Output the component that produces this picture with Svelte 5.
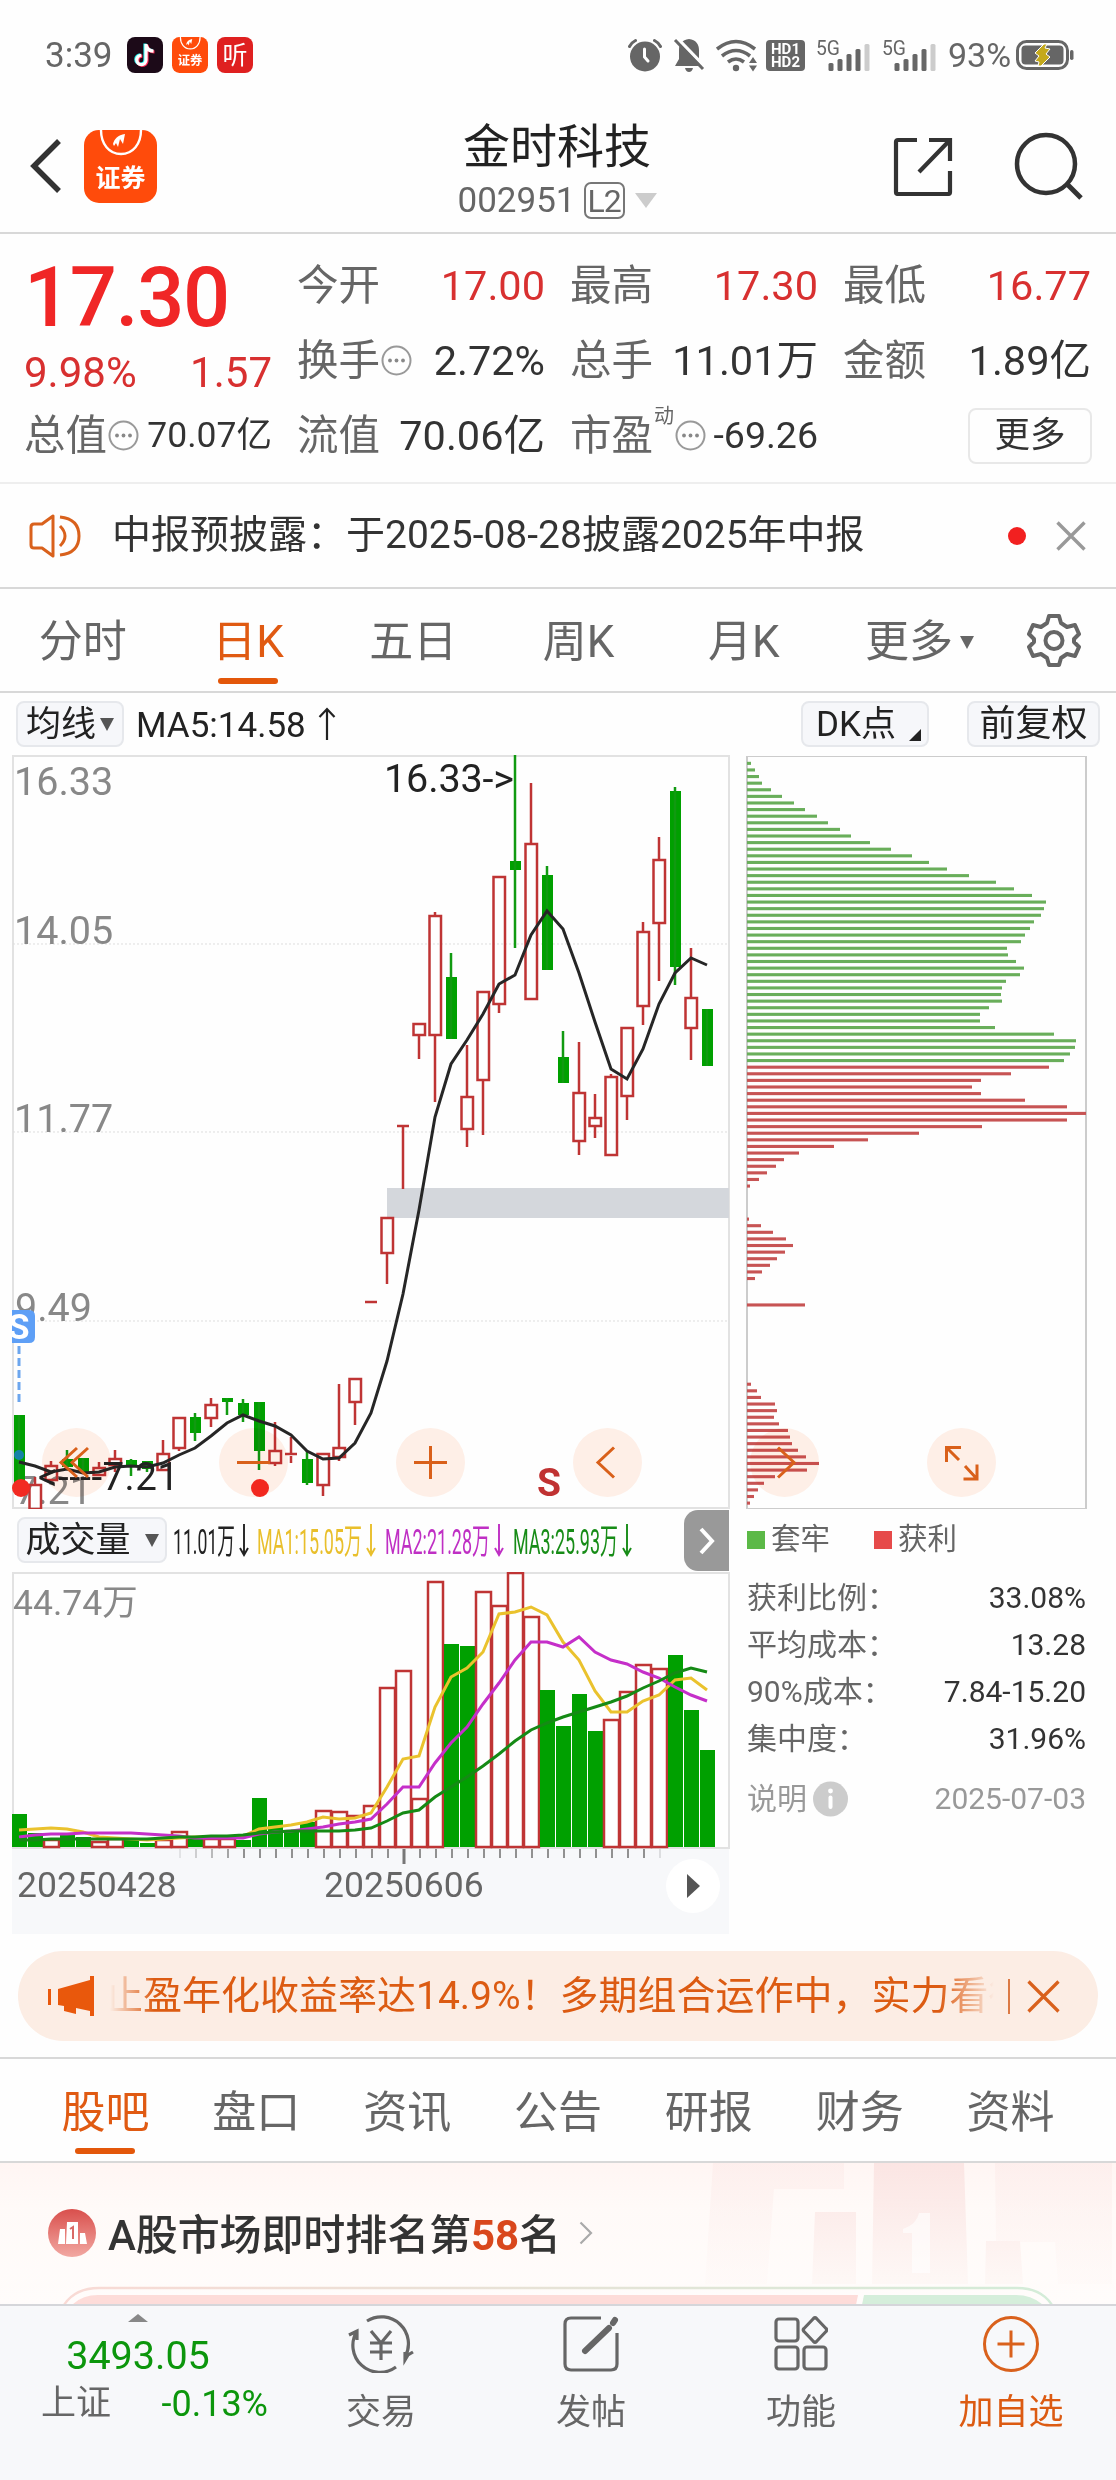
<script>
  // [up, high, body top, body bottom, low]
  const candles = [
    [0, 660, 660, 729, 729], [1, 722, 730, 754, 754], [1, 706, 711, 725, 726], [0, 695, 704, 712, 712],
    [0, 703, 703, 718, 718], [1, 707, 713, 720, 720], [1, 695, 704, 710, 717], [0, 704, 705, 712, 721],
    [0, 706, 706, 714, 717], [1, 685, 699, 715, 715], [1, 663, 663, 693, 696], [0, 658, 662, 678, 686],
    [1, 643, 650, 663, 672], [0, 643, 643, 647, 660], [0, 644, 648, 660, 667], [0, 647, 647, 696, 715],
    [1, 667, 696, 708, 711], [1, 682, 699, 701, 708], [0, 696, 704, 728, 730], [1, 699, 699, 730, 741],
    [1, 629, 693, 702, 706], [1, 624, 624, 647, 670], [1, 547, 547, 548, 548], [1, 463, 463, 498, 529],
    [1, 371, 371, 372, 434], [1, 269, 269, 280, 304], [1, 157, 161, 280, 347], [0, 198, 222, 284, 284],
    [1, 290, 342, 374, 392], [1, 237, 237, 325, 380], [1, 122, 122, 249, 258], [0, 0, 106, 115, 193],
    [1, 28, 89, 244, 244], [0, 111, 120, 215, 215], [0, 276, 302, 328, 328], [1, 287, 338, 386, 400],
    [1, 339, 363, 371, 383], [1, 319, 322, 400, 400], [1, 273, 273, 341, 365], [1, 167, 177, 251, 270],
    [1, 82, 105, 168, 226], [0, 32, 36, 212, 230], [1, 193, 243, 273, 305], [0, 254, 254, 311, 311]
  ];
  const ma5 = [707, 711, 717, 714, 718, 717, 712, 711, 712, 708, 700, 693, 681, 668, 660, 666, 671, 680, 696, 704, 703, 688, 658, 606, 539, 455, 362, 309, 285, 259, 229, 220, 180, 156, 174, 218, 267, 314, 324, 294, 249, 218, 203, 210];

  const volumes = [242, 261, 268, 262, 265, 270, 267, 268, 271, 268, 260, 266, 267, 267, 268, 226, 248, 260, 250, 239, 240, 244, 234, 116, 99, 227, 10, 72, 74, 20, 34, 1, 45, 118, 154, 122, 159, 148, 120, 93, 97, 83, 138, 178];
  const volUp = [2, 5, 6, 9, 10, 12, 13, 19, 20, 21, 22, 23, 24, 25, 26, 29, 30, 31, 32, 37, 38, 39, 40];
  const volMa1 = [258, 257, 256, 257, 260, 265, 266, 267, 268, 267, 266, 265, 265, 265, 264, 257, 255, 253, 250, 245, 247, 246, 241, 215, 187, 184, 135, 105, 96, 80, 42, 40, 35, 43, 70, 88, 119, 140, 140, 129, 123, 108, 106, 118];
  const volMa2 = [265, 263, 262, 262, 261, 261, 261, 261, 262, 263, 264, 266, 266, 266, 266, 262, 260, 259, 257, 255, 252, 250, 247, 232, 215, 215, 191, 171, 155, 132, 111, 88, 70, 70, 75, 65, 80, 88, 92, 100, 106, 115, 123, 129];
  const volMa3 = [268, 268, 267, 267, 267, 267, 267, 267, 267, 266, 265, 265, 264, 264, 263, 261, 260, 259, 259, 259, 259, 258, 256, 249, 241, 238, 225, 215, 205, 194, 182, 169, 158, 151, 145, 140, 135, 130, 124, 116, 109, 101, 96, 100];

  const chips = [
    4, 8, 12, 15, 24, 35, 47, 58, 70, 81, 93, 104, 123, 144, 165, 182, 200, 222, 249, 267, 285, 299, 297, 294, 287, 283, 278, 274, 260, 261, 269, 277, 273, 259, 255, 254, 255, 242, 233, 233, 248, 307, 329, 328, 323, 317,
    302, 264, 234, 225, 234, 278, 320, 339, 320, 235, 172, 121, 87, 52, 37, 29, 20, 12, 3, 0, 0, 0, 0, 2, 14, 26, 39, 46, 38, 30, 23, 15, 8, 0, 0, 0, 58, 0, 0, 0, 0, 0, 0, 0, 0, 0, 0, 0,
    4, 10, 14, 28, 30, 27, 32, 41, 43, 45, 51, 59, 72, 60, 28, 17, 11, 7, 3
  ];
  const greenChips = 46;

  const gridLines = [189, 377, 566];
  const priceLabels = [['16.33', 40], ['14.05', 189], ['11.77', 377], ['9.49', 566], ['7.21', 749]];
  const ticks = Array.from({ length: 31 }, (_, i) => i + 10);

  const volStats = [
    { text: '11.01万', x: 161, w: 62, color: '#222' },
    { text: 'MA1:15.05万', x: 245, w: 105, color: '#e9bf2b' },
    { text: 'MA2:21.28万', x: 373, w: 105, color: '#bf2fc4' },
    { text: 'MA3:25.93万', x: 501, w: 105, color: '#178c17' }
  ];

  const periods = ['分时', '日K', '五日', '周K', '月K'];
  const sections = ['股吧', '盘口', '资讯', '公告', '研报', '财务', '资料'];
  const costs = [
    ['获利比例：', '33.08%'],
    ['平均成本：', '13.28'],
    ['90%成本：', '7.84-15.20'],
    ['集中度：', '31.96%']
  ];

  const cx = (i) => 7 + i * 16;
  const line = (values) => values.map((y, i) => `${cx(i)},${y}`).join(' ');
  const tickOpacity = (i) => (i < 14 ? (i - 9) * 0.2 : i === 40 ? 0.25 : 1);
</script>

{#snippet dots()}
  <svg class="dots" width="31" height="31" viewBox="0 0 31 31">
    <circle cx="15.5" cy="15.5" r="14" fill="none" stroke="#999" stroke-width="2" />
    <circle cx="9" cy="15.5" r="1.9" fill="#888" />
    <circle cx="15.5" cy="15.5" r="1.9" fill="#888" />
    <circle cx="22" cy="15.5" r="1.9" fill="#888" />
  </svg>
{/snippet}

{#snippet brand(size)}
  <svg width={size} height={size} viewBox="0 0 73 73">
    <rect width="73" height="73" rx="15" fill="#ff4b0b" />
    <path d="M17 0c0 14 8 24 20 24s20-10 20-24" fill="none" stroke="#fff" stroke-width="2.4" />
    <path d="M29 14c1-5 5-9 12-10l-2 10-3-5-2 8-2-4-2 3z" fill="#fff" />
    <text x="36.5" y="57" text-anchor="middle" font-size="25" font-weight="700" fill="#fff">证券</text>
  </svg>
{/snippet}

{#snippet signal()}
  <svg class="signal" width="54" height="32" viewBox="0 0 54 32">
    <text x="0" y="16" font-size="20" textLength="24" lengthAdjust="spacingAndGlyphs" fill="#666">5G</text>
    <g fill="#666">
      <rect x="12.5" y="24" width="5" height="8" rx="1.5" />
      <rect x="21.5" y="20" width="5" height="12" rx="1.5" />
      <rect x="30.5" y="15" width="5" height="17" rx="1.5" />
      <rect x="39.5" y="10" width="5" height="22" rx="1.5" />
      <rect x="48.5" y="5" width="5" height="27" rx="1.5" fill="#ccc" />
    </g>
  </svg>
{/snippet}

<div class="page">
  <div class="status">
    <span class="time">3:39</span>
    <svg class="app" width="36" height="36" viewBox="0 0 36 36">
      <rect width="36" height="36" rx="8" fill="#1c0a18" />
      <g fill="none" stroke-width="3.2">
        <path d="M19 7v16a4.6 4.6 0 1 1-4.6-4.6M19 7.5c.5 4 3.5 6.5 7.5 6.7" stroke="#25f4ee" transform="translate(-1 -.6)" />
        <path d="M19 7v16a4.6 4.6 0 1 1-4.6-4.6M19 7.5c.5 4 3.5 6.5 7.5 6.7" stroke="#fe2c55" transform="translate(1 .8)" />
        <path d="M19 7v16a4.6 4.6 0 1 1-4.6-4.6M19 7.5c.5 4 3.5 6.5 7.5 6.7" stroke="#fff" />
      </g>
    </svg>
    <span class="app">{@render brand(36)}</span>
    <span class="app listen">听</span>

    <div class="status-right">
      <svg width="34" height="34" viewBox="0 0 34 34">
        <circle cx="17" cy="18.5" r="15" fill="#666" />
        <path d="M1.5 8.5q2-4 6-6M32.5 8.5q-2-4-6-6" fill="none" stroke="#666" stroke-width="3" stroke-linecap="round" />
        <path d="M16.5 11v8l3.500 4" fill="none" stroke="#fff" stroke-width="3" stroke-linecap="round" />
      </svg>
      <svg width="32" height="34" viewBox="0 0 32 34">
        <path d="M16 1c7 1 10 5 10 11v9l4 7H2l4-7v-9c0-6 3-10 10-11z" fill="#666" />
        <path d="M12 30h8q-1 4-4 4t-4-4z" fill="#666" />
        <path d="M4 0l28 29" stroke="#fff" stroke-width="3.5" />
        <path d="M2 2l28 29" stroke="#666" stroke-width="3" />
      </svg>
      <svg width="42" height="33" viewBox="0 0 42 33">
        <g fill="none" stroke="#666" stroke-width="3.6">
          <path d="M1 10q19-15 38 0" />
          <path d="M6 17q14-11 28 0" />
          <path d="M12 23q8-6 16 0" />
        </g>
        <circle cx="20" cy="29" r="3.2" fill="#666" />
        <path d="M33 24l4-6 4 6zM33 26.5l4 6 4-6z" fill="#666" />
      </svg>
      <svg class="hd" width="39" height="31" viewBox="0 0 39 31">
        <rect width="39" height="31" rx="4" fill="#666" />
        <g font-size="14" font-weight="700" fill="#fff">
          <text x="5" y="14" textLength="29" lengthAdjust="spacingAndGlyphs">HD1</text>
          <text x="5" y="27" textLength="29" lengthAdjust="spacingAndGlyphs">HD2</text>
        </g>
      </svg>
      {@render signal()}
      {@render signal()}
      <span class="percent">93%</span>
      <svg width="58" height="30" viewBox="0 0 58 30">
        <rect x="1.5" y="1.5" width="50" height="27" rx="9" fill="none" stroke="#666" stroke-width="3" />
        <rect x="5.5" y="5.5" width="42" height="19" rx="4" fill="#666" />
        <rect x="54" y="10" width="3.5" height="10" rx="1.7" fill="#666" />
        <path d="M28 4l-9 9 4 3-4 5 4 1-1 4h3l9-9-4-3 4-5-5-1 2-4z" fill="#c4a91c" stroke="#fff" />
      </svg>
    </div>
  </div>

  <header>
    <svg class="back" width="34" height="56" viewBox="0 0 34 56"><path d="M30 3L5 28l25 25" fill="none" stroke="#333" stroke-width="5.5" /></svg>
    {@render brand(73)}
    <div class="title">
      <div class="name">金时科技</div>
      <div class="code">002951<span class="level">L2</span><i></i></div>
    </div>
    <svg class="share" width="60" height="60" viewBox="0 0 60 60">
      <path d="M24 4H5q-2 0-2 2v50q0 2 2 2h50q2 0 2-2V35M36 4h21v21M57 4L26 36" fill="none" stroke="#333" stroke-width="4.2" />
    </svg>
    <svg width="72" height="72" viewBox="0 0 72 72">
      <circle cx="33" cy="34" r="29" fill="none" stroke="#333" stroke-width="4.5" />
      <path d="M54 54l14 14" stroke="#333" stroke-width="5" />
    </svg>
  </header>

  <section class="quote">
    <div class="main">
      <div class="price">17.30</div>
      <div class="change"><span>9.98%</span><span>1.57</span></div>
      <div class="cell"><label>总值</label>{@render dots()}<b class="small">70.07亿</b></div>
    </div>
    <div>
      <div class="cell"><label>今开</label><b class="red">17.00</b></div>
      <div class="cell"><label>换手</label>{@render dots()}<b>2.72%</b></div>
      <div class="cell"><label>流值</label><b>70.06亿</b></div>
    </div>
    <div>
      <div class="cell"><label>最高</label><b class="red">17.30</b></div>
      <div class="cell"><label>总手</label><b>11.01万</b></div>
      <div class="cell"><label>市盈</label><sup>动</sup>{@render dots()}<b class="mid">-69.26</b></div>
    </div>
    <div>
      <div class="cell"><label>最低</label><b class="red">16.77</b></div>
      <div class="cell"><label>金额</label><b>1.89亿</b></div>
      <div class="cell"><button class="more">更多</button></div>
    </div>
  </section>

  <div class="notice">
    <svg width="52" height="44" viewBox="0 0 52 44">
      <g fill="none" stroke="#d9611c" stroke-width="3">
        <path d="M24 2v40l-11-8H5q-3 0-3-3V13q0-3 3-3h8z" stroke-linejoin="round" />
        <path d="M31 12q10 10 0 20M31 3q19 2 19 19T31 41" />
      </g>
    </svg>
    <span>中报预披露：于2025-08-28披露2025年中报</span>
    <em></em>
    <svg width="30" height="30" viewBox="0 0 30 30"><path d="M1.5 1.5l27 27M28.5 1.5l-27 27" stroke="#999" stroke-width="3.4" /></svg>
  </div>

  <nav class="periods">
    {#each periods as period, i}
      <span class:active={i === 1}>{period}</span>
    {/each}
    <span>更多<i></i></span>
    <svg width="54" height="54" viewBox="0 0 54 54">
      <g fill="none" stroke="#666" stroke-width="4" stroke-linejoin="round">
        <path d="M22 3h10l2 7 6 4 8-2 4 9-5 5v3l5 5-4 9-8-2-6 4-2 7H22l-2-7-6-4-8 2-4-9 5-5v-3l-5-5 4-9 8 2 6-4z" />
        <circle cx="27" cy="27.5" r="8.5" />
      </g>
    </svg>
  </nav>

  <div class="toolbar">
    <button class="tag">均线<i></i></button>
    <span>MA5:14.58</span>
    <svg width="18" height="34" viewBox="0 0 18 34"><path d="M9 33V2M1.5 10L9 2l7.5 8" fill="none" stroke="#222" stroke-width="2.2" /></svg>
    <button class="tag dk">DK点<i></i></button>
    <button class="tag adj">前复权</button>
  </div>

  <div class="charts">
    <div class="left">
      <svg class="kline" width="718" height="754" viewBox="0 0 718 754">
        <rect x="1" y="1" width="716" height="752" fill="none" stroke="#e2e2e2" stroke-width="2" />
        {#each gridLines as y}
          <line x1="1" x2="717" y1={y} y2={y} stroke="#ddd" stroke-dasharray="2 2" />
        {/each}
        <g font-size="39.5" fill="#888">
          {#each priceLabels as [label, y]}
            <text x={label.length > 4 ? 2 : 3} {y}>{label}</text>
          {/each}
        </g>
        <rect x="375" y="433" width="342" height="30" fill="#d4d7dc" />
        {#each candles as [up, high, top, bottom, low], i}
          {#if up}
            <g fill="none" stroke="#bf3434" stroke-width="2.5">
              {#if bottom - top < 3}
                <path d="M{cx(i) - 6} {top}h12" />
              {:else}
                <rect x={cx(i) - 5.5} y={top} width="11.5" height={bottom - top} />
              {/if}
              <path d="M{cx(i)} {high}V{top}M{cx(i)} {bottom}V{low}" />
            </g>
          {:else}
            <rect x={cx(i) - 5} y={top} width="11" height={bottom - top} fill="#00a000" />
            <path d="M{cx(i)} {high}V{low}" stroke="#119a11" stroke-width="2.5" />
          {/if}
        {/each}
        <polyline points={line(ma5)} fill="none" stroke="#262626" stroke-width="3" />
        <text x="372" y="37" font-size="39.5" textLength="130" fill="#222">16.33-&gt;</text>
        <text x="26" y="735" font-size="38.5" textLength="141" fill="#222">&lt;----7.21</text>
        <path d="M0 555h17q6 0 6 6v21q0 6-6 6H0z" fill="#5e9ff6" />
        <text x="-4" y="584" font-size="35" font-weight="700" fill="#fff">S</text>
        <path d="M7 591v58" stroke="#6ca6ee" stroke-width="3" stroke-dasharray="8 4" />
        <circle cx="7" cy="700" r="5" fill="#1682a8" />
        <circle cx="9" cy="733" r="9" fill="#f22a22" />
        <circle cx="248" cy="733" r="9" fill="#f22a22" />
        <text x="525" y="741" font-size="39" font-weight="700" fill="#c03232">S</text>
      </svg>

      <div class="vol-head">
        <svg width="717" height="63" viewBox="0 0 717 63">
          <g font-size="35">
            {#each volStats as s}
              <text x={s.x} y="45" textLength={s.w} lengthAdjust="spacingAndGlyphs" fill={s.color}>{s.text}</text>
              <path d="M{s.x + s.w + 9} 15v31m-4-7l4 7 4-7" fill="none" stroke={s.color} stroke-width="1.9" />
            {/each}
          </g>
        </svg>
        <button class="tag vol">成交量<i></i></button>
        <button class="next">
          <svg width="16" height="28" viewBox="0 0 16 28"><path d="M2 2l11 12L2 26" fill="none" stroke="#fff" stroke-width="4" /></svg>
        </button>
      </div>

      <svg width="718" height="277" viewBox="0 0 718 277">
        <rect x="1" y="1" width="716" height="275" fill="none" stroke="#e2e2e2" stroke-width="2" />
        {#each volumes as y, i}
          {#if volUp.includes(i)}
            <rect x={cx(i) - 7} {y} width="15" height={275 - y} fill="none" stroke="#bf3434" stroke-width="2.5" />
          {:else}
            <rect x={cx(i) - 7} {y} width="15" height={275 - y} fill="#00a000" />
          {/if}
        {/each}
        <g fill="none" stroke-width="3">
          <polyline points={line(volMa1)} stroke="#eac22d" />
          <polyline points={line(volMa2)} stroke="#c52fc9" />
          <polyline points={line(volMa3)} stroke="#158a15" />
        </g>
        <text x="1" y="43" font-size="35.5" fill="#888">44.74万</text>
      </svg>

      <div class="axis">
        <svg width="717" height="17" viewBox="0 0 717 17">
          {#each ticks as i}
            <path d="M{cx(i) + 1} 0v{i === 24 ? 15 : 9}" stroke="#777" stroke-width={i === 24 ? 3 : 1.6} opacity={tickOpacity(i)} />
          {/each}
        </svg>
        <div class="dates"><span>20250428</span><span>20250606</span><button><i></i></button></div>
      </div>
    </div>

    <div class="right">
      <svg width="342" height="754" viewBox="0 0 342 754">
        <path d="M0 1.5h341M0 753.5h341" stroke="#ccc" />
        <path d="M1 1v753M340 1v753" stroke="#ccc" stroke-width="2" />
        {#each chips as w, i}
          {#if w}
            <rect x="1" y={6.8 + i * 6.605} width={w} height="3.1" fill={i < greenChips ? '#69ae5a' : '#c75454'} />
          {/if}
        {/each}
      </svg>
      <div class="legend"><i></i>套牢<i class="win"></i>获利</div>
      {#each costs as [label, value]}
        <div class="cost"><span>{label}</span><b>{value}</b></div>
      {/each}
      <div class="cost explain">
        <span>说明</span>
        <svg width="35" height="36" viewBox="0 0 35 36">
          <circle cx="17.5" cy="18" r="17.5" fill="#ccc" />
          <circle cx="17.5" cy="10" r="2.4" fill="#fff" />
          <path d="M17.5 16.5v9.5" stroke="#fff" stroke-width="4" stroke-linecap="round" />
        </svg>
        <b>2025-07-03</b>
      </div>
    </div>

    <div class="controls">
      <button><svg viewBox="0 0 69 69"><path d="M35 20L19 34.5 35 49M46 20L30 34.5 46 49" /></svg></button>
      <button><svg viewBox="0 0 69 69"><path d="M18 34.5h33" /></svg></button>
      <button><svg viewBox="0 0 69 69"><path d="M18 34.5h33M34.5 18v33" /></svg></button>
      <button><svg viewBox="0 0 69 69"><path d="M41 19.5L25 34.5l16 15" /></svg></button>
      <button><svg viewBox="0 0 69 69"><path d="M28 19.5l16 15-16 15" /></svg></button>
      <button><svg viewBox="0 0 69 69"><path d="M19.5 34V19.5H34M20 20l12 12M50 36.5V51H36.5M50 51L38 38" /></svg></button>
    </div>
  </div>

  <div class="promo">
    <svg width="46" height="40" viewBox="0 0 46 40"><path d="M0 13h3v16H0zM10 13L42 4V0h4v40h-4v-5l-14-3v6l-12-3v-5l-6-1z" fill="#e9580c" /></svg>
    <div class="marquee"><span>止盈年化收益率达14.9%！多期组合运作中，实力看得见</span></div>
    <em></em>
    <svg width="33" height="33" viewBox="0 0 33 33"><path d="M1.5 1.5l30 30M31.5 1.5l-30 30" stroke="#d9611c" stroke-width="3.2" /></svg>
  </div>

  <nav class="sections">
    {#each sections as name, i}
      <span class:active={i === 0}>{name}</span>
    {/each}
  </nav>

  <section class="rank">
    <svg class="podium" width="416" height="121" viewBox="0 0 416 121">
      <defs>
        <linearGradient id="fade" x1="0" y1="0" x2="0" y2="121" gradientUnits="userSpaceOnUse">
          <stop offset="0" stop-color="#fbe5e3" />
          <stop offset="1" stop-color="#fef8f6" />
        </linearGradient>
      </defs>
      <g fill="url(#fade)">
        <path d="M13 0h131v26H74l-7 95H5z" opacity=".4" />
        <path d="M115 49h41v72h-44zM174 0h90l4 121H172zM286 78h34l3 43h-38z" />
        <path d="M295 0h117v121h-54l-3-42h-59z" opacity=".4" />
      </g>
      <path d="M203 66q14-5 16-16h11v60h-18V70h-9z" fill="#fff" opacity=".6" />
    </svg>
    <div class="rank-row">
      <svg width="48" height="48" viewBox="0 0 48 48">
        <defs>
          <linearGradient id="medal" x1="0" y1="0" x2="0" y2="1">
            <stop offset="0" stop-color="#d94f4c" />
            <stop offset="1" stop-color="#f2a8a2" />
          </linearGradient>
        </defs>
        <circle cx="24" cy="24" r="24" fill="url(#medal)" />
        <path d="M12 20h5v15h-7zM19 13h11v22H18zM32 24h5l2 11h-7z" fill="#fff" />
        <path d="M22 20l3-2v12" fill="none" stroke="#d96a66" stroke-width="2" />
      </svg>
      <strong>A股市场即时排名第<em>58</em>名</strong>
      <svg width="14" height="24" viewBox="0 0 14 24"><path d="M1.5 1.5L12 12 1.5 22.5" fill="none" stroke="#aaa" stroke-width="2.2" /></svg>
    </div>
    <svg class="vote" width="990" height="18" viewBox="0 0 990 18">
      <defs>
        <linearGradient id="edge"><stop offset="0" stop-color="#f9dad5" /><stop offset="1" stop-color="#d3ecd8" /></linearGradient>
      </defs>
      <path d="M1 19Q12 2 36 2h918q24 0 35 17" fill="none" stroke="url(#edge)" stroke-width="2.4" />
      <path d="M9 19q10-10 26-10h760l-2 10z" fill="#fddcd9" />
      <path d="M801 9h152q16 0 27 10H799z" fill="#d5eedb" />
    </svg>
  </section>

  <footer>
    <div class="index">
      <i></i>
      <strong>3493.05</strong>
      <p><span>上证</span><b>-0.13%</b></p>
    </div>
    <div class="item">
      <svg width="66" height="58" viewBox="0 0 66 58">
        <g fill="none" stroke="#666" stroke-width="3.2">
          <path d="M19 6A27 27 0 0 1 57 42M48 52A27 27 0 0 1 9 16M1 20l8-4v9M65 37l-5 3-3 5v-8" />
          <path d="M23 16l10 12 10-12M33 28v17M22 28h22M22 37h22" />
        </g>
      </svg>
      交易
    </div>
    <div class="item">
      <svg width="56" height="58" viewBox="0 0 56 58">
        <path d="M38 3H8Q2 3 2 9v40q0 6 6 6h40q6 0 6-6V18" fill="none" stroke="#666" stroke-width="3.2" />
        <path d="M52 5l-2 3M46 13L22 36" stroke="#666" stroke-width="6" stroke-linecap="round" />
      </svg>
      发帖
    </div>
    <div class="item">
      <svg width="54" height="58" viewBox="0 0 54 58">
        <g fill="none" stroke="#666" stroke-width="3.2">
          <rect x="2" y="4" width="22" height="22" rx="3" />
          <rect x="2" y="32" width="22" height="22" rx="3" />
          <rect x="30" y="32" width="22" height="22" rx="3" />
          <path d="M39.5 3.5q1.5-1.5 3 0l9.5 10q1.5 1.5 0 3l-9.5 10q-1.500 1.500-3 0l-9.500-10q-1.500-1.500 0-3z" />
        </g>
      </svg>
      功能
    </div>
    <div class="item add">
      <svg width="58" height="58" viewBox="0 0 58 58">
        <g fill="none" stroke="#d9611c" stroke-width="3"><circle cx="29" cy="29" r="26.5" /><path d="M15.5 29h27M29 15.5v27" /></g>
      </svg>
      加自选
    </div>
  </footer>
</div>

<style>
:global(body) {
    margin: 0;
    background: #fff;
}

.page {
    width: 1116px;
    height: 2480px;
    overflow: hidden;
    background: #fefefe;
    font-family: Roboto, "Noto Sans CJK SC", sans-serif;
    line-height: 1;
    color: #333;
}

.page * {
    box-sizing: border-box;
}

svg {
    display: block;
    flex: none;
}

i, em {
    font-style: normal;
}

b {
    font-weight: 400;
}

button {
    display: flex;
    align-items: center;
    justify-content: center;
    padding: 0;
    border: 0;
    background: none;
    font: inherit;
    color: inherit;
    line-height: 1;
}

.status {
    display: flex;
    align-items: center;
    height: 110px;
    padding-left: 45px;
    color: #666;
    font-size: 35px;
}

.time {
    width: 82px;
}

.app {
    margin-right: 9px;
}

.listen {
    display: flex;
    align-items: center;
    justify-content: center;
    width: 36px;
    height: 36px;
    border-radius: 8px;
    background: #df2020;
    color: #fff;
    font-size: 25px;
}

.status-right {
    display: flex;
    align-items: center;
    gap: 11px;
    margin-left: auto;
    padding-right: 42px;
}

.hd {
    margin-left: -3px;
}

.signal {
    margin-right: 1px;
    overflow: visible;
}

.percent {
    width: 62px;
    margin: 0 -5px 0 0;
    font-size: 34px;
}

header {
    display: flex;
    align-items: center;
    height: 124px;
    padding: 0 31px 10px 29px;
    border-bottom: 2px solid #d8d8d8;
}

.back {
    margin-right: 21px;
}

.title {
    display: flex;
    flex-direction: column;
    align-items: center;
    width: 400px;
    margin: 9px auto 0 200px;
}

.name {
    margin-bottom: 12px;
    color: #222;
    font-size: 47px;
}

.code {
    display: flex;
    align-items: center;
    color: #666;
    font-size: 35px;
}

.level {
    margin-left: 8px;
    height: 37px;
    width: 41px;
    border: 2px solid #777;
    border-radius: 7px;
    font-size: 32px;
    line-height: 35px;
    text-align: center;
    letter-spacing: -1px;
}

.code i {
    margin-left: 10px;
    border: 11px solid transparent;
    border-top: 15px solid #ccc;
    border-bottom: 0;
}

.share {
    margin-right: 60px;
}

.quote {
    display: grid;
    grid-template-columns: repeat(4, 248px);
    column-gap: 25px;
    height: 250px;
    padding: 14px 0 0 24px;
    border-bottom: 2px solid #eee;
}

.cell {
    display: flex;
    align-items: center;
    height: 75px;
    font-size: 41.5px;
}

.cell label {
    color: #666;
}

.cell b, .more {
    margin-left: auto;
    white-space: nowrap;
}

.dots {
    margin-left: 1px;
}

.cell .small {
    font-size: 35.5px;
}

.cell .mid {
    font-size: 37.5px;
}

.cell sup {
    align-self: flex-start;
    margin: 8px 0 0 1px;
    color: #666;
    font-size: 20px;
}

.cell .red, .change {
    color: #d83030;
}

.price {
    height: 100px;
    color: #f02626;
    font-size: 83px;
    font-weight: 500;
    line-height: 100px;
    letter-spacing: -1.4px;
}

.change {
    display: flex;
    justify-content: space-between;
    height: 50px;
    font-size: 42px;
    line-height: 50px;
}

.more {
    width: 124px;
    height: 56px;
    margin-right: -1px;
    border: 2px solid #e8e8e8;
    border-radius: 8px;
    font-size: 35.5px;
}

.notice {
    display: flex;
    align-items: center;
    height: 105px;
    padding: 0 30px 0 29px;
    border-bottom: 2px solid #d8d8d8;
    font-size: 39px;
}

.notice span {
    margin-left: 31px;
}

.notice em {
    width: 18px;
    height: 18px;
    margin: 0 30px 0 auto;
    border-radius: 50%;
    background: #f22020;
}

.periods {
    display: flex;
    align-items: center;
    height: 104px;
    border-bottom: 2px solid #d8d8d8;
    color: #666;
    font-size: 44px;
}

.periods span {
    position: relative;
    display: flex;
    justify-content: center;
    align-items: center;
    width: 165.3px;
    height: 100%;
    padding-top: 4px;
}

.periods span:nth-of-type(6) {
    width: 201px;
    padding-right: 15px;
}

.periods i {
    margin-left: 7px;
    border: 7.5px solid transparent;
    border-top: 13px solid #666;
    border-bottom: 0;
}

.active {
    color: #e05a12;
}

.periods .active::after, .sections .active::after {
    content: '';
    position: absolute;
    left: calc(50% - 30px);
    bottom: 7px;
    width: 60px;
    height: 6px;
    border-radius: 3px;
    background: #e3570a;
}

.toolbar {
    display: flex;
    align-items: center;
    height: 62px;
    padding: 0 16px;
    color: #222;
    font-size: 35px;
}

.toolbar > span {
    margin: 2px 12px 0 12px;
}

.tag {
    width: 108px;
    height: 46px;
    border: 2px solid #e6e8ec;
    border-radius: 8px;
    background: #f6f7fa;
    color: #222;
    font-size: 35px;
}

.tag i {
    margin-left: 4px;
    border: 7.5px solid transparent;
    border-top: 13px solid #555;
    border-bottom: 0;
}

.tag.dk {
    width: 128px;
    margin: 0 38px 0 auto;
}

.tag.dk i {
    align-self: flex-end;
    margin: 0 -7px 4px 13px;
    border: 0;
    border-left: 12px solid transparent;
    border-bottom: 12px solid #222;
}

.tag.adj {
    width: 133px;
    font-size: 36px;
}

.charts {
    position: relative;
    display: flex;
    gap: 17px;
    height: 1196px;
    padding-left: 12px;
}

.left {
    width: 717px;
}

.vol-head {
    position: relative;
    height: 63px;
}

.tag.vol {
    position: absolute;
    left: 5px;
    top: 8px;
    width: 150px;
}

.tag.vol i {
    margin-left: 14px;
}

.next {
    position: absolute;
    right: 0;
    top: 1px;
    width: 45px;
    height: 61px;
    border-radius: 14px 0 0 14px;
    background: #999;
}

.axis {
    height: 85px;
    background: #f7f8fa;
}

.dates {
    display: flex;
    align-items: center;
    height: 40px;
    padding: 0 9px 0 5px;
    color: #666;
    font-size: 35.5px;
}

.dates span {
    width: 307px;
}

.dates button {
    width: 54px;
    height: 54px;
    margin-left: auto;
    border-radius: 50%;
    background: #fff;
}

.dates i {
    border: 12px solid transparent;
    border-left: 13px solid #555;
    border-right: 0;
}

.right {
    width: 340px;
}

.legend {
    display: flex;
    align-items: center;
    height: 62px;
    margin-bottom: 3px;
    color: #666;
    font-size: 29.5px;
}

.legend i {
    width: 18px;
    height: 18px;
    margin: 0 6px 0 1px;
    background: #5bb947;
}

.legend .win {
    margin-left: 44px;
    background: #e64a4a;
}

.cost {
    display: flex;
    justify-content: space-between;
    align-items: center;
    height: 47px;
    padding-left: 1px;
    font-size: 30px;
}

.cost span {
    color: #666;
}

.explain {
    height: 73px;
}

.explain svg {
    margin: 0 auto 0 6px;
}

.explain span, .explain b {
    color: #999;
}

.controls {
    position: absolute;
    left: 42px;
    top: 673px;
    display: flex;
    gap: 108px;
}

.controls button {
    position: relative;
    width: 69px;
    height: 69px;
}

/* tinted disc keeps the bars below it readable */
.controls button::before {
    content: '';
    position: absolute;
    inset: 0;
    border-radius: 50%;
    background: #fff0e8;
    mix-blend-mode: multiply;
}

.controls svg {
    position: relative;
}

.controls path {
    fill: none;
    stroke: #d9601a;
    stroke-width: 3;
}

.promo {
    display: flex;
    align-items: center;
    width: 1080px;
    height: 90px;
    margin-left: 18px;
    padding: 0 38px 0 30px;
    border-radius: 45px;
    background: #fcede4;
    color: #dc5b12;
    font-size: 39px;
}

.marquee {
    width: 892px;
    margin-left: 10px;
    overflow: hidden;
    white-space: nowrap;
    line-height: 56px;
    mask-image: linear-gradient(90deg, transparent 6px, #000 50px, #000 835px, transparent 890px);
}

.promo em {
    width: 2px;
    height: 35px;
    margin: 0 17px 0 14px;
    background: #dc7a45;
}

.sections {
    display: flex;
    height: 106px;
    margin-top: 16px;
    padding: 0 30px;
    border-top: 2px solid #d8d8d8;
    border-bottom: 2px solid #d8d8d8;
    color: #666;
    font-size: 44px;
}

.sections span {
    position: relative;
    display: flex;
    flex: 1;
    align-items: center;
    justify-content: center;
    padding-top: 5px;
}

.rank {
    position: relative;
    height: 141px;
    overflow: hidden;
    background: linear-gradient(#fff5f3, #fffaf8 30%, #fffcfb);
}

.podium {
    position: absolute;
    right: 0;
    top: 0;
}

.rank-row {
    position: relative;
    display: flex;
    align-items: center;
    height: 123px;
    padding: 16px 0 0 48px;
    font-size: 42px;
}

.rank-row strong {
    margin: 6px 18px 0 12px;
    font-weight: 500;
    letter-spacing: -.1px;
}

.rank-row em {
    color: #d9471c;
    font-weight: 700;
}

.vote {
    margin-left: 63px;
}

footer {
    display: flex;
    height: 176px;
    border-top: 2px solid #d5d6da;
    background: #f7f8fa;
    color: #666;
    font-size: 35px;
}

.index {
    display: flex;
    flex-direction: column;
    align-items: center;
    width: 276px;
    padding-top: 8px;
}

.index > i {
    border: 10px solid transparent;
    border-bottom: 8px solid #888;
    border-top: 0;
}

.index strong {
    margin: 14px 0 10px;
    color: #0c960c;
    font-size: 39.5px;
    font-weight: 400;
}

.index p {
    display: flex;
    width: 227px;
    justify-content: space-between;
    margin: 0 0 0 33px;
}

.index b {
    color: #0c960c;
    font-size: 36px;
}

.item {
    display: flex;
    flex-direction: column;
    align-items: center;
    gap: 22px;
    width: 210px;
    padding-top: 9px;
}

.add {
    color: #dc5b12;
}
</style>
